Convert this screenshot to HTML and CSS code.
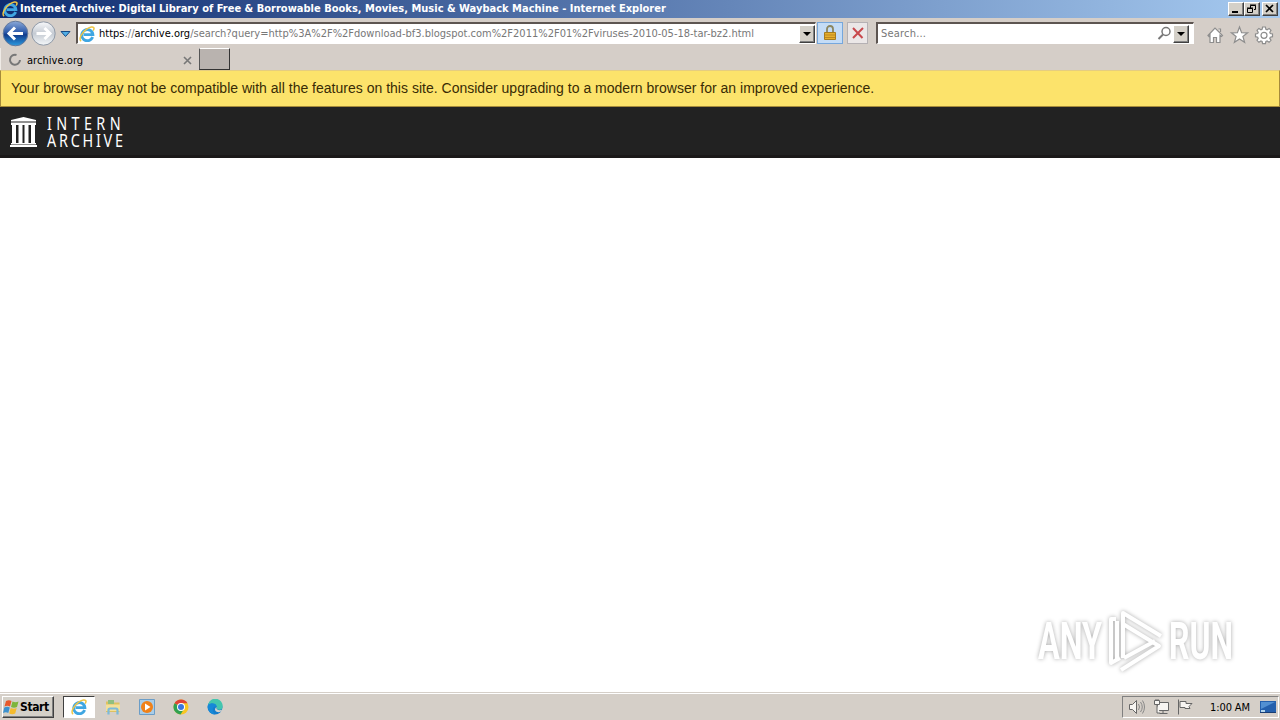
FILE: index.html
```html
<!DOCTYPE html>
<html lang="en">
<head>
  <meta charset="UTF-8">
  <title>Internet Archive - Internet Explorer</title>
  <link rel="stylesheet" href="styles.css">
</head>
<body>
  <svg class="defs" width="0" height="0">
    <linearGradient id="blue" x1="0" y1="0" x2="0" y2="1">
      <stop offset="0" stop-color="#8ba9d8"/>
      <stop offset=".45" stop-color="#2e5bab"/>
      <stop offset=".55" stop-color="#123c8c"/>
      <stop offset="1" stop-color="#2b9be0"/>
    </linearGradient>
    <linearGradient id="pale" x1="0" y1="0" x2="0" y2="1">
      <stop offset="0" stop-color="#f8f9fb"/>
      <stop offset=".5" stop-color="#c5cbd3"/>
      <stop offset="1" stop-color="#f5f8fa"/>
    </linearGradient>
    <symbol id="ie" viewBox="0 0 16 16">
      <path d="M13.600 11A5.600 5.600 0 1 1 13.900 8.700H4.600" fill="none" stroke="#3fa6e2" stroke-width="2.800"/>
      <path d="M2.200 15C-1 13.500 3 6 8 2.800 11 .8 14.600.2 15 2c.1.800-.3 1.800-.8 2.600" fill="none" stroke="#efc545" stroke-width="1.500"/>
    </symbol>
  </svg>

  <header class="titlebar">
    <svg class="ie-small"><use href="#ie"/></svg>
    <h1>Internet Archive: Digital Library of Free &amp; Borrowable Books, Movies, Music &amp; Wayback Machine - Internet Explorer</h1>
    <div class="window-buttons">
      <button><svg width="12" height="10"><path d="M2 8h6" stroke="#000" stroke-width="2"/></svg></button>
      <button><svg width="12" height="10"><path d="M4.500 4V1.500h5v4H8M1.500 4.500h5v4h-5zM4 1h6M1 4h6" fill="none" stroke="#000"/></svg></button>
      <button class="close"><svg width="12" height="10"><path d="M2 1l7 7M9 1L2 8" stroke="#000" stroke-width="1.700"/></svg></button>
    </div>
  </header>

  <nav class="toolbar">
    <svg class="history" width="72" height="30">
      <circle cx="15.500" cy="15.500" r="12.300" fill="url(#blue)" stroke="#64799c"/>
      <path d="M23 15.500H9M15 9.500l-6 6 6 6" fill="none" stroke="#fff" stroke-width="3"/>
      <circle cx="43.500" cy="15.500" r="11.700" fill="url(#pale)" stroke="#8f99a7"/>
      <path d="M36.500 15.500H50M44.500 10l5.500 5.500-5.500 5.500" fill="none" stroke="#fff" stroke-width="3"/>
      <path d="M61 13.500h9l-4.500 5z" fill="#51aee5" stroke="#164a86"/>
    </svg>
    <div class="field address">
      <svg class="ie-icon"><use href="#ie"/></svg>
      <span class="url"><b>https</b>://<b>archive.org</b>/search?query=http%3A%2F%2Fdownload-bf3.blogspot.com%2F2011%2F01%2Fviruses-2010-05-18-tar-bz2.html</span>
      <button class="drop"></button>
    </div>
    <button class="tool lock">
      <svg width="14" height="18"><path d="M4 9V5a3 3 0 0 1 6 0v4" fill="none" stroke="#8b8660" stroke-width="1.800"/><path d="M1.500 8.500h11v7h-11z" fill="#e6b02d" stroke="#a77c1f"/><path d="M2 11h10M2 13.500h10" stroke="#bd8720"/></svg>
    </button>
    <button class="tool stop">
      <svg width="14" height="14"><path d="M2 2l9.500 10M12 2L2 12" stroke="#c8494d" stroke-width="2"/></svg>
    </button>
    <div class="field search">
      <span>Search...</span>
      <svg width="15" height="15"><circle cx="9" cy="5.500" r="4" fill="none" stroke="#777" stroke-width="1.500"/><path d="M6 8.500L1.500 13" stroke="#777" stroke-width="2"/></svg>
      <button class="drop"></button>
    </div>
    <svg class="actions" width="70" height="20" fill="#fff" stroke="#8d8d8d" stroke-width="1.200">
      <path d="M2 10.500L9 3l7.500 7.500-1 1-1.500-1.300V17.500h-3.500v-5h-3v5H4v-7.300L3 11.500zM12.500 4h2v3"/>
      <path d="M33.500 2l2.100 5.600 6 .2-4.700 3.700 1.700 5.800-5.100-3.400-5.100 3.400 1.700-5.800-4.700-3.700 6-.2z"/>
      <path d="M56.600 2h2.800l.5 2.200 1.200.5 2-1.300 1.900 2-1.200 1.900.5 1.200 2.200.5v2.700l-2.200.5-.5 1.200 1.200 1.900-1.900 2-2-1.300-1.200.5-.5 2.200h-2.800l-.5-2.200-1.200-.5-2 1.300-1.900-2 1.200-1.900-.5-1.200-2.200-.5V9l2.200-.5.5-1.200L51 5.400l1.900-2 2 1.300 1.200-.5z"/>
      <circle cx="58" cy="10.300" r="3"/>
    </svg>
  </nav>

  <div class="tabs">
    <div class="tab">
      <svg width="14" height="14"><path d="M8.500 2A5 5 0 1 0 12 7" fill="none" stroke="#777" stroke-width="2"/></svg>
      <span>archive.org</span>
      <svg class="tab-close" width="9" height="9"><path d="M1 1l7 7M8 1L1 8" stroke="#777" stroke-width="1.600"/></svg>
    </div>
    <button class="new-tab"></button>
  </div>

  <div class="banner">Your browser may not be compatible with all the features on this site. Consider upgrading to a modern browser for an improved experience.</div>

  <div class="site-header">
    <svg width="27" height="31" fill="#fff">
      <path d="M13.500 1L26 4v1.500H1V4zM1 6.500h25V9H1zM1 27h25v1.500H1zM0 29h27v2H0zM2 9h4v18H2zM8.500 9h4v18h-4zM14.500 9h4v18h-4zM21 9h4v18h-4z"/>
    </svg>
    <svg class="wordmark" width="78" height="34">
      <g transform="scale(.8 1)">
        <text x="0" y="14" textLength="92">INTERN</text>
        <text x="0" y="31" textLength="95">ARCHIVE</text>
      </g>
    </svg>
  </div>

  <main class="page">
    <svg class="watermark" width="204" height="72">
      <text x="4" y="54" textLength="64" lengthAdjust="spacingAndGlyphs">ANY</text>
      <g fill="none" stroke="#fff" stroke-width="4" stroke-linejoin="round">
        <path d="M89 53V8l38 23"/>
        <path d="M82 14h-5v44l9-5"/>
        <path d="M83 56V16M89 19l36 22-38 24M90 53l31-17"/>
      </g>
      <text x="135" y="54" textLength="64" lengthAdjust="spacingAndGlyphs">RUN</text>
    </svg>
  </main>

  <footer class="taskbar">
    <button class="start">
      <svg width="17" height="16">
        <path d="M3 2q3-1.500 5.500 0L7 7.500q-2.500-1.500-5.500 0z" fill="#e8592b"/>
        <path d="M9.500 2.500q3 1.500 6 0L14 8q-3 1.500-6 0z" fill="#7eb53b"/>
        <path d="M1.300 8.500q3-1.500 5.500 0L5.300 14Q3 12.500 0 14z" fill="#3d91ce"/>
        <path d="M7.700 9q3 1.500 6 0l-1.500 5.500q-3 1.500-6 0z" fill="#f5bb2e"/>
      </svg>
      Start
    </button>
    <div class="task active"><svg class="ie-icon"><use href="#ie"/></svg></div>
    <div class="launchers">
      <svg width="16" height="16"><path d="M1 2.500h5l1 1h7.500V13H1z" fill="#dfc160"/><path d="M3 1h6v4H3z" fill="#8fbf80"/><path d="M1 5.500h14V12H1z" fill="#f3e09a"/><path d="M3.500 15.500V11q0-1.500 1.500-1.500h6q1.500 0 1.500 1.500v4.500" fill="none" stroke="#7dbad9" stroke-width="2.200"/></svg>
      <svg width="16" height="16"><path d="M.5.500h15v15H.5z" fill="#a9cde8" stroke="#6b9dc7"/><circle cx="8" cy="8" r="6" fill="#f08119"/><path d="M6 4.500v7L11.500 8z" fill="#fff"/></svg>
      <svg width="16" height="16"><circle cx="8" cy="8" r="7.500" fill="#f8c622"/><path d="M8 8L1.500 4.200A7.500 7.500 0 0 1 14.500 4.200H8z" fill="#df4336"/><path d="M8 8L1.500 4.200A7.500 7.500 0 0 0 7.500 15.500L11 10z" fill="#30a152"/><circle cx="8" cy="8" r="4" fill="#fff"/><circle cx="8" cy="8" r="3" fill="#3a76df"/></svg>
      <svg width="16" height="16"><circle cx="8" cy="8" r="7.500" fill="#147dcc"/><path d="M1 6a7.300 7.300 0 0 1 14.500 2c0 3-4 3.500-6 2 2-4-4-7-8.500-4z" fill="#43c6ae"/><path d="M1 6c3-3 9-2 8.500 2-3-2-6 3-1.500 7.400A7.500 7.500 0 0 1 1 6z" fill="#1689d8"/><path d="M9.500 10c2 1.500 4 1.500 6 .5-1 2-3 3-5 2.500-2.500-.5-3.500-3-1-5z" fill="#d6d2cc"/></svg>
    </div>
    <div class="tray">
      <svg width="66" height="18" fill="#f7f5f2" stroke="#666">
        <path d="M.5 6.500h3l4-4v13l-4-4h-3z"/>
        <path d="M9.500 6q2 3 0 6M11.500 4q3.500 5 0 10M13.500 2.500q4 6.500 0 13" fill="none" stroke="#888"/>
        <path d="M28.500 4.500h11v8h-11zM34 13v2M30.500 15.500h8"/>
        <path d="M25.500 2.500h5v4h-5zM27 1v2M29 1v2M28 7v8h3"/>
        <path d="M49.500 1.500v15M51 3.500h6v2h6l-3 3 1 2h-5v-1h-5z"/>
      </svg>
      <time>1:00 AM</time>
      <svg class="desktop" width="16" height="14"><path d="M0 1h16v11H0z" fill="#2460ad"/><path d="M1 2h14L1 9z" fill="#5290d2"/><path d="M0 12h16v1H0z" fill="#173d73"/><path d="M1 10h4v2H1z" fill="#b1d5ed"/></svg>
    </div>
  </footer>
</body>
</html>
```
FILE: styles.css
```css
* { box-sizing: border-box; }
body {
  margin: 0;
  height: 100vh;
  display: flex;
  flex-direction: column;
  overflow: hidden;
  background: #fff;
  color: #000;
  font: 11px "DejaVu Sans Condensed", "DejaVu Sans", sans-serif;
}
svg { display: block; flex: none; }
button {
  padding: 0;
  border: 1px solid;
  border-color: #fff #404040 #404040 #fff;
  background: #d4d0c8;
  font: inherit;
}
.defs { position: absolute; }
.titlebar {
  height: 18px;
  display: flex;
  align-items: center;
  padding: 0 2px;
  background: linear-gradient(90deg, #0f2c70, #a6caf0);
}
.ie-small { width: 16px; height: 16px; }
h1 {
  margin: 0 0 0 2px;
  color: #fff;
  font-size: 11px;
  line-height: 18px;
  white-space: nowrap;
  letter-spacing: 0.01px;
}
.window-buttons { display: flex; margin-left: auto; }
.window-buttons button {
  width: 16px;
  height: 14px;
  padding: 1px;
  box-shadow: inset -1px -1px #808080;
}
.window-buttons .close { margin-left: 2px; }
.toolbar {
  height: 30px;
  display: flex;
  align-items: flex-start;
  background: #d5cec8;
}
.history { margin-right: 4px; }
.field {
  height: 22px;
  margin-top: 4px;
  display: flex;
  align-items: center;
  background: #fff;
  border: 1px solid;
  border-color: #5d5551 #fff #fff #5d5551;
  border-top-width: 2px;
  border-left-width: 2px;
  color: #777;
}
.address { width: 740px; }
.ie-icon { width: 16px; height: 16px; }
.address .ie-icon { margin-left: 1px; }
.url {
  margin-left: 4px;
  white-space: nowrap;
}
.url b { font-weight: normal; color: #000; }
.drop {
  width: 16px;
  height: 18px;
  margin-left: auto;
  box-shadow: inset -1px -1px #808080;
  display: flex;
  align-items: center;
  justify-content: center;
}
.drop::after {
  content: "";
  border: 4px solid transparent;
  border-top-color: #000;
  border-bottom: 0;
}
.tool {
  height: 22px;
  margin-top: 4px;
  display: flex;
  align-items: center;
  justify-content: center;
}
.lock {
  width: 26px;
  margin-left: 1px;
  background: #c4dcf6;
  border-color: #76a7dc;
}
.stop {
  width: 21px;
  margin-left: 4px;
  background: #ebe7e7;
  border-color: #b5b1b4;
}
.search {
  width: 318px;
  margin-left: 8px;
  padding: 0 4px 0 3px;
  letter-spacing: 0.2px;
}
.search svg { margin-left: auto; }
.search .drop { margin-left: 1px; }
.actions { margin: 7px 0 0 12px; }
.tabs {
  height: 22px;
  display: flex;
  background: #d5cec8;
}
.tab {
  width: 199px;
  display: flex;
  align-items: center;
  padding: 2px 7px 0 7px;
  border-left: 1px solid #efebe6;
}
.tab span { margin-left: 5px; letter-spacing: 0.05px; }
.tab-close { margin-left: auto; }
.new-tab {
  width: 31px;
  background: #b9b3af;
  border-color: #fff #333 #333 #555;
}
.banner {
  height: 37px;
  padding: 0 10px;
  background: #fce36b;
  border: 1px solid #a68b3a;
  border-top-color: #e5cd80;
  color: #382b05;
  font: 14px/35px "Liberation Sans", Arial, sans-serif;
  letter-spacing: 0.01px;
}
.site-header {
  height: 51px;
  padding: 9px 10px;
  display: flex;
  background: #222;
  border-bottom: 3px solid #1b1919;
}
.wordmark {
  margin-left: 10px;
  overflow: visible;
  fill: #fff;
  font: 18px "Noto Sans", sans-serif;
}
.page { flex: 1; }
.watermark {
  position: absolute;
  left: 1034px;
  top: 605px;
  overflow: visible;
  fill: #fff;
  font: bold 52px Roboto, sans-serif;
  filter: drop-shadow(0 0 2px #aaa);
}
.taskbar {
  height: 28px;
  display: flex;
  align-items: center;
  padding: 1px 1px 0 2px;
  background: #d5cfc8;
  border-top: 1px solid #d5cfc8;
  box-shadow: inset 0 1px #fff;
}
.start {
  width: 52px;
  height: 22px;
  display: flex;
  align-items: center;
  box-shadow: inset -1px -1px #808080;
  font-weight: bold;
  font-size: 12px;
  letter-spacing: -0.4px;
}
.task {
  width: 32px;
  height: 22px;
  margin-left: 9px;
  display: flex;
  align-items: center;
  justify-content: center;
  background: #fff;
  border: 1px solid;
  border-color: #404040 #fff #fff #404040;
}
.launchers { display: flex; gap: 18px; margin-left: 10px; }
.tray {
  width: 157px;
  height: 22px;
  margin-left: auto;
  display: flex;
  align-items: center;
  padding: 0 2px 0 6px;
  border: 1px solid;
  border-color: #808080 #fff #fff #808080;
}
time { margin-left: 15px; letter-spacing: -0.1px; white-space: nowrap; }
.desktop { margin-left: auto; }
```
